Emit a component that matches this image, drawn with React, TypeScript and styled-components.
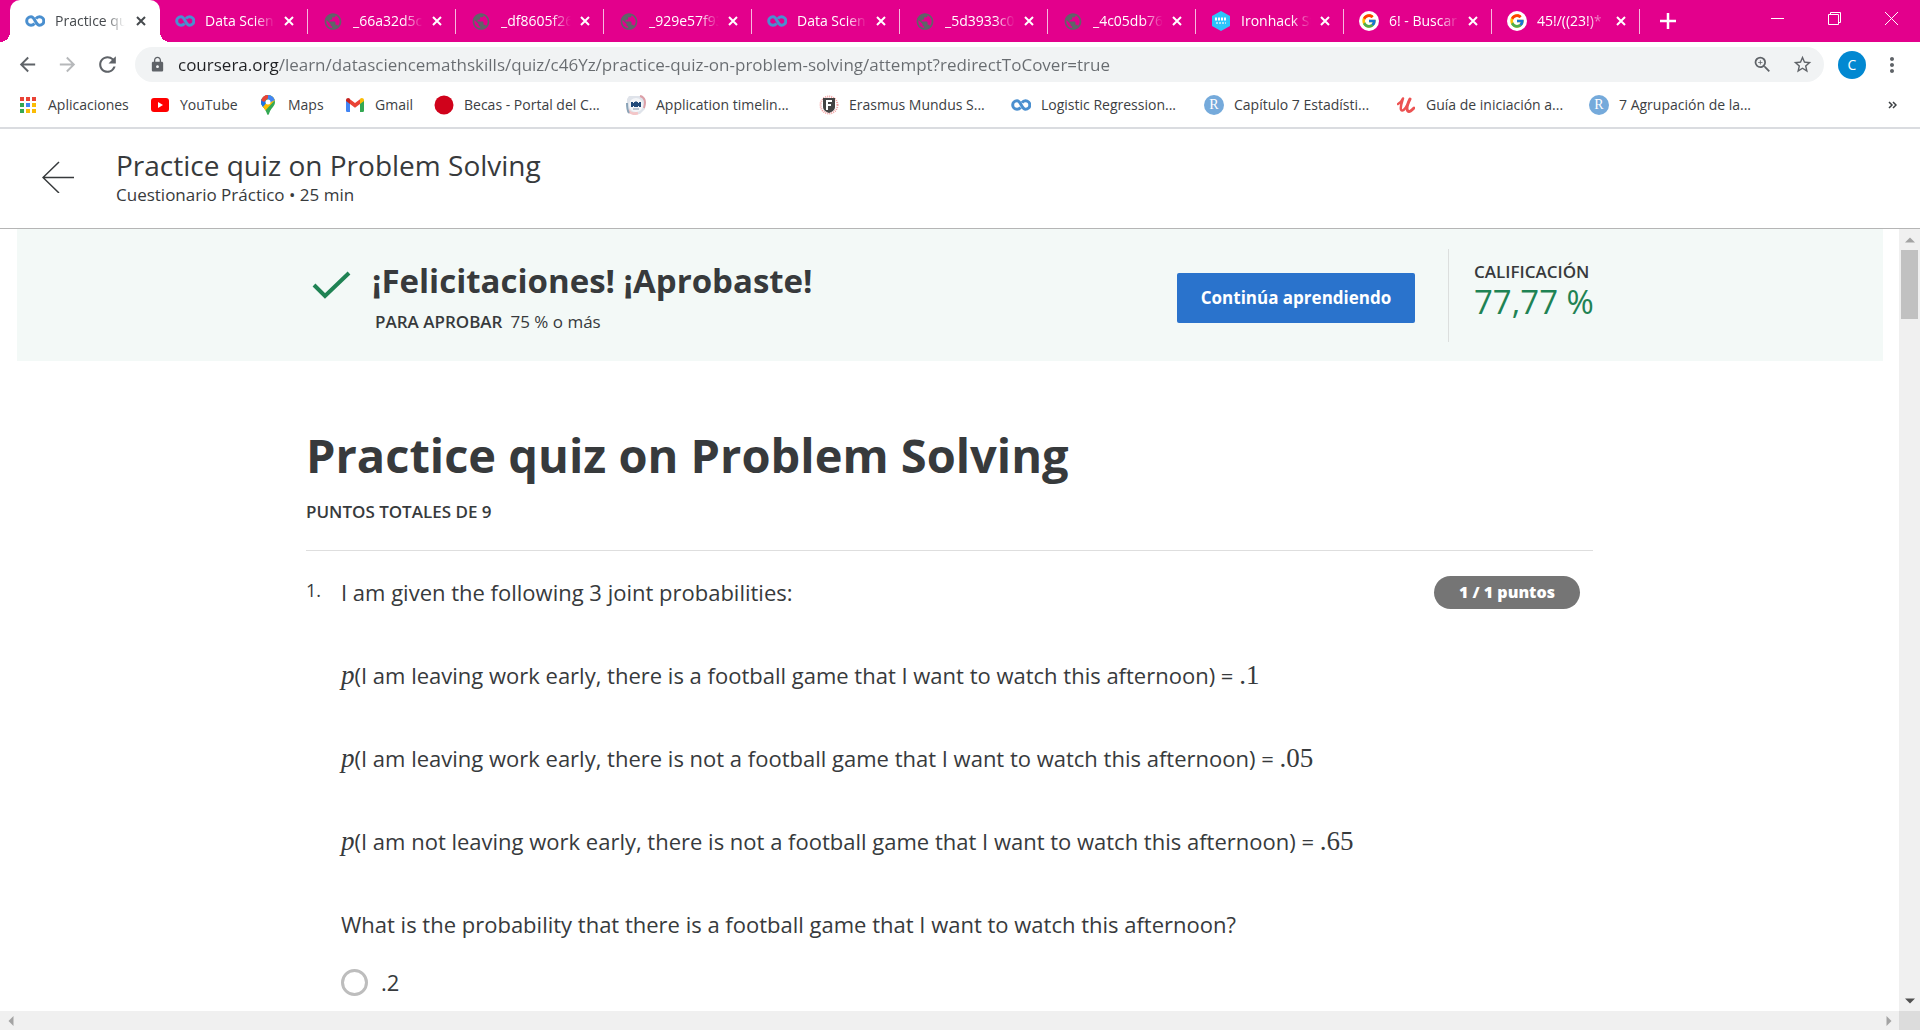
import React from 'react';
import styled, { createGlobalStyle, css } from 'styled-components';
import { MdArrowBack, MdArrowForward, MdLock, MdMoreVert, MdPublic, MdRefresh, MdStarBorder, MdZoomIn } from 'react-icons/md';
import { FcGoogle } from 'react-icons/fc';

const GlobalStyle = createGlobalStyle`
  *, *::before, *::after { box-sizing: border-box; }
  html, body, #root { height: 100%; }
  body { margin: 0; background: #fff; color: #373a3c; font-family: "Open Sans", "Noto Sans", sans-serif; overflow: hidden; }
  h1, h2, p { margin: 0; font-weight: 400; }
  button { font: inherit; color: inherit; border: 0; padding: 0; background: none; cursor: pointer; }
  a { color: inherit; text-decoration: none; }
  svg { display: block; }
`;

/* ---------- browser frame ---------- */

const Window = styled.div`
  display: flex;
  flex-direction: column;
  height: 100vh;
`;

const TabStrip = styled.div`
  display: flex;
  align-items: stretch;
  height: 42px;
  padding-left: 10px;
  flex: none;
  background: #e3008c;
  color: #fff;
  font-size: 14px;
`;

const Tab = styled.div<{ $active?: boolean }>`
  position: relative;
  display: flex;
  align-items: center;
  flex: 0 1 148px;
  min-width: 0;
  padding: 0 9px 0 15px;
  ${(p) =>
    !p.$active &&
    css`
      &::after {
        content: '';
        position: absolute;
        right: 0;
        top: 9px;
        width: 1px;
        height: 25px;
        background: #f7b8de;
      }
    `}
  ${(p) =>
    p.$active &&
    css`
      flex-basis: 150px;
      background: #fff;
      color: #45494d;
      border-radius: 10px 10px 0 0;
      &::before,
      &::after {
        content: '';
        position: absolute;
        bottom: 0;
        width: 10px;
        height: 10px;
      }
      &::before {
        left: -10px;
        background: radial-gradient(circle at 0 0, transparent 10px, #fff 10px);
      }
      &::after {
        right: -10px;
        background: radial-gradient(circle at 100% 0, transparent 10px, #fff 10px);
      }
    `}
`;

const TabLink = styled.a`
  display: flex;
  align-items: center;
  gap: 10px;
  flex: 1;
  min-width: 0;
`;

const IconBox = styled.span`
  display: flex;
  align-items: center;
  justify-content: center;
  flex: none;
  width: 20px;
  height: 20px;
`;

const TabTitle = styled.span`
  flex: none;
  width: 70px;
  overflow: hidden;
  white-space: nowrap;
  line-height: 20px;
  mask-image: linear-gradient(90deg, #000 50px, transparent 70px);
`;

const TabClose = styled.button`
  display: flex;
  align-items: center;
  justify-content: center;
  width: 20px;
  height: 20px;
`;

const NewTab = styled.button`
  display: flex;
  align-items: center;
  justify-content: center;
  width: 56px;
`;

const WindowControls = styled.div`
  display: flex;
  margin-left: auto;
`;

const WindowButton = styled.button`
  display: flex;
  align-items: center;
  justify-content: center;
  width: 57px;
  height: 37px;
`;

const Toolbar = styled.div`
  display: flex;
  align-items: center;
  height: 45px;
  flex: none;
  padding: 0 8px 0 7px;
  color: #5f6368;
`;

const ToolButton = styled.button<{ $faded?: boolean }>`
  display: flex;
  align-items: center;
  justify-content: center;
  width: 40px;
  height: 35px;
  opacity: ${(p) => (p.$faded ? 0.45 : 1)};
`;

const AddressBar = styled.div`
  display: flex;
  align-items: center;
  flex: 1;
  height: 35px;
  margin: 0 8px;
  padding: 0 2px 0 14px;
  border-radius: 18px;
  background: #f1f3f4;
`;

const AddressInput = styled.input`
  flex: 1;
  min-width: 0;
  height: 24px;
  margin-left: 12px;
  padding: 0;
  border: 0;
  outline: 0;
  font: 17px/24px 'Open Sans', 'Noto Sans', sans-serif;
  color: #5f6368;
  -webkit-text-fill-color: transparent;
  background: linear-gradient(90deg, #202124 101px, #686c70 101px);
  -webkit-background-clip: text;
  background-clip: text;
`;

const Avatar = styled.button`
  width: 28px;
  height: 28px;
  margin: 0 6px;
  border-radius: 50%;
  background: #0288d1;
  color: #fff;
  font-size: 14px;
  line-height: 28px;
`;

const BookmarksBar = styled.nav`
  display: flex;
  align-items: center;
  height: 42px;
  flex: none;
  padding: 0 18px 4px;
  border-bottom: 2px solid #dadce0;
  font-size: 14px;
  line-height: 20px;
  color: #3c4043;
`;

const Bookmark = styled.a<{ $w: number }>`
  display: flex;
  align-items: center;
  gap: 10px;
  flex: 0 1 ${(p) => p.$w}px;
  white-space: nowrap;
`;

const MoreBookmarks = styled.button`
  margin-left: auto;
  width: 20px;
  display: flex;
  justify-content: center;
`;

/* ---------- course page ---------- */

const PageHeader = styled.header`
  display: flex;
  align-items: center;
  gap: 42px;
  flex: none;
  height: 100px;
  padding: 0 42px 3px;
  border-bottom: 1px solid #b5b5b5;
`;

const HeaderTitle = styled.p`
  font-size: 28px;
  line-height: 36px;
`;

const HeaderMeta = styled.p`
  font-size: 17px;
  line-height: 24px;
`;

const Viewport = styled.div`
  display: grid;
  grid-template-columns: 1fr 21px;
  grid-template-rows: 1fr 19px;
  flex: 1;
  min-height: 0;
`;

const Scroller = styled.main`
  overflow: hidden;
  padding: 0 16px 0 17px;
`;

const Container = styled.div`
  width: 100%;
  max-width: 1288px;
  margin: 0 auto;
  padding-right: 1px;
`;

const Banner = styled.section`
  height: 132px;
  background: #f3f9f7;
`;

const BannerRow = styled(Container)`
  display: flex;
  align-items: flex-start;
  height: 100%;
  padding-top: 20px;
`;

const Result = styled.div`
  display: flex;
  gap: 20px;
  flex: 1;
  padding: 10px 0 0 6px;
`;

const ResultIcon = styled.div`
  padding-top: 11px;
`;

const ResultTitle = styled.h2`
  font-size: 33px;
  line-height: 44px;
  font-weight: 700;
`;

const PassLine = styled.p`
  padding: 7px 0 0 3px;
  font-size: 17px;
  line-height: 24px;
`;

const Strong = styled.strong`
  font-weight: 600;
  margin-right: 8px;
`;

const PrimaryButton = styled.button`
  width: 238px;
  height: 50px;
  margin-top: 24px;
  border-radius: 2px;
  background: #2a73cc;
  color: #fff;
  font-size: 17px;
  line-height: 24px;
  font-weight: 700;
`;

const Grade = styled.div`
  height: 93px;
  margin-left: 33px;
  padding: 11px 0 0 25px;
  border-left: 1px solid #dcdfde;
  width: 145px;
  white-space: nowrap;
`;

const GradeLabel = styled.p`
  font-size: 17px;
  line-height: 24px;
  font-weight: 600;
`;

const GradeValue = styled.p`
  font-size: 33px;
  line-height: 36px;
  color: #1f8354;
`;

const QuizTitle = styled.h1`
  padding-top: 60px;
  font-size: 47px;
  line-height: 68px;
  font-weight: 700;
`;

const QuizPoints = styled.p`
  padding: 11px 0 26px;
  border-bottom: 1px solid #dedede;
  font-size: 17px;
  line-height: 24px;
  font-weight: 600;
`;

const Question = styled.section`
  display: flex;
  padding-top: 25px;
`;

const QuestionNumber = styled.span`
  flex: none;
  width: 35px;
  padding-top: 2px;
  font-size: 18px;
  line-height: 24px;
`;

const QuestionBody = styled.div`
  flex: 1;
  min-width: 0;
  font-size: 22px;
  line-height: 32px;
`;

const Statement = styled.p`
  margin-bottom: 51px;
`;

const Ask = styled.p`
  margin-bottom: 26px;
`;

const MathText = styled.span<{ $italic?: boolean }>`
  font-family: 'Liberation Serif', 'Times New Roman', serif;
  font-size: 27px;
  line-height: 0;
  font-style: ${(p) => (p.$italic ? 'italic' : 'normal')};
`;

const Option = styled.label`
  display: flex;
  align-items: center;
  gap: 13px;
`;

const Radio = styled.input`
  appearance: none;
  width: 27px;
  height: 27px;
  margin: 0;
  border: 3px solid #bdbdbd;
  border-radius: 50%;
`;

const Points = styled.span`
  flex: none;
  width: 146px;
  height: 33px;
  margin-right: 13px;
  border-radius: 17px;
  background: #757575;
  color: #fff;
  text-align: center;
  font-size: 16px;
  line-height: 33px;
  font-weight: 800;
`;

const VerticalBar = styled.div`
  display: flex;
  flex-direction: column;
  align-items: center;
  background: #f0f0f0;
`;

const HorizontalBar = styled.div`
  display: flex;
  justify-content: space-between;
  align-items: center;
  background: #f0f0f0;
`;

const Thumb = styled.div`
  width: 17px;
  height: 69px;
  margin-bottom: auto;
  background: #c1c1c1;
`;

const ScrollButton = styled.button`
  display: flex;
  align-items: center;
  justify-content: center;
  width: 21px;
  height: 21px;
`;

const Corner = styled.div`
  background: #dcdcdc;
`;

/* ---------- drawings ---------- */

const Cross = () => (
  <svg width="10" height="10" viewBox="0 0 10 10" stroke="currentColor" strokeWidth="2">
    <path d="M1 1l8 8M9 1L1 9" />
  </svg>
);

const CourseraIcon = () => (
  <svg width="20" height="12" viewBox="0 0 20 12" fill="none" stroke="#4a8fcf" strokeWidth="3">
    <path d="M9.500 8.500C8.500 9.800 7.300 10.300 6 10.300a4.300 4.300 0 1 1 0-8.600c4 0 4.500 8.600 8.500 8.600a4.300 4.300 0 1 0 0-8.600c-1.500 0-2.600.6-3.500 1.900" />
  </svg>
);

const AppsIcon = () => {
  const colors = ['#ea4335', '#ea4335', '#ea4335', '#34a853', '#4285f4', '#fbbc05', '#34a853', '#fbbc05', '#fbbc05'];
  return (
    <svg width="17" height="17" viewBox="0 0 17 17">
      {colors.map((c, i) => (
        <rect key={i} x={(i % 3) * 6} y={Math.floor(i / 3) * 6} width="4" height="4" fill={c} />
      ))}
    </svg>
  );
};

const YouTubeIcon = () => (
  <svg width="18" height="14" viewBox="0 0 18 14">
    <rect width="18" height="14" rx="3" fill="#f00" />
    <path d="M7 4l5 3-5 3z" fill="#fff" />
  </svg>
);

const MapsIcon = () => (
  <svg width="14" height="20" viewBox="0 0 14 20">
    <clipPath id="pin">
      <path d="M7 0a7 7 0 0 1 7 7c0 4-3.500 5.500-5.500 10.500C8 19 7.600 20 7 20s-1-1-1.500-2.500C3.500 12.500 0 11 0 7a7 7 0 0 1 7-7z" />
    </clipPath>
    <g clipPath="url(#pin)">
      <rect width="14" height="20" fill="#34a853" />
      <path d="M0 13L14-2v7L3 17z" fill="#fbbc04" />
      <path d="M-1 0h9L0 10z" fill="#ea4335" />
      <path d="M5-1h9v6L8 8z" fill="#4285f4" />
      <path d="M0 3l6 4-5 6-3-3z" fill="#1a73e8" />
      <path d="M0 5l3-4 4-2v4L3 7z" fill="#ea4335" />
    </g>
    <circle cx="7" cy="7" r="2.500" fill="#fff" />
  </svg>
);

const GmailIcon = () => (
  <svg width="18" height="14" viewBox="0 0 18 14">
    <path d="M0 2.500L4 5v9H1.200A1.200 1.200 0 0 1 0 12.800z" fill="#4285f4" />
    <path d="M18 2.500L14 5v9h2.800a1.200 1.200 0 0 0 1.200-1.200z" fill="#34a853" />
    <path d="M14 1.200V6l4-3v-.7C18 .3 15.800-.6 14.300.6z" fill="#fbbc04" />
    <path d="M4 6V1.200l5 3.700 5-3.700V6L9 9.800z" fill="#ea4335" />
    <path d="M0 2.300V3l4 3V1.200L3.700.6C2.200-.6 0 .3 0 2.300z" fill="#c5221f" />
  </svg>
);

const DiscIcon = () => (
  <svg width="20" height="20" viewBox="0 0 20 20">
    <circle cx="10" cy="10" r="9.500" fill="#d0021b" />
  </svg>
);

const CrestIcon = () => (
  <svg width="20" height="20" viewBox="0 0 20 20">
    <path d="M3 1h12l4 3v10l-5 5H3l-2-4V4z" fill="#dfe3ea" />
    <path d="M14 1c5 1 6 6 4 12" fill="none" stroke="#dca0a8" strokeWidth="2" />
    <path d="M2 15c2 4 7 4 10 3" fill="none" stroke="#f3c6c8" strokeWidth="3" />
    <path d="M1 8c0 4 0 7 2 10" fill="none" stroke="#8aa4b8" strokeWidth="2" />
    <circle cx="10" cy="10" r="7" fill="#f4f6f9" />
    <path d="M5 7h2v1h1V7h1l1-1 1 1h1v1h1V7h2v5h-2v-1h-1v1H8v-1H7v1H5z" fill="#214a7a" />
    <path d="M7 14h6" stroke="#7f93aa" />
  </svg>
);

const ShieldIcon = () => (
  <svg width="20" height="20" viewBox="0 0 20 20">
    <circle cx="10" cy="10" r="8.500" fill="none" stroke="#f0a0a0" strokeWidth="2" strokeDasharray="1 1" />
    <path d="M4 3h12v9c0 3-3 5-6 6-3-1-6-3-6-6z" fill="#444" />
    <path d="M8 15V6h5M8 10h4" fill="none" stroke="#fff" strokeWidth="2" />
  </svg>
);

const RBadge = styled.span`
  width: 20px;
  height: 20px;
  border-radius: 50%;
  background: #75aadb;
  color: #fff;
  text-align: center;
  font: 14px/20px 'Liberation Serif', serif;
`;

const UdemyIcon = () => (
  <svg width="18" height="16" viewBox="0 0 18 16" fill="none" stroke="#ec5252" strokeLinecap="round" strokeLinejoin="round">
    <path d="M1 7c2-1 4-3 5-5.500C5 5 3 10 4 12.500s4 0 6-4" strokeWidth="2.500" />
    <path d="M13 2c-2 4-4 9-2.500 11.500S15 13 17 11" strokeWidth="3" />
  </svg>
);

const IronhackIcon = () => (
  <svg width="20" height="20" viewBox="0 0 20 20">
    <path d="M10 0l9 5v10l-9 5-9-5V5z" fill="#2dc5fa" />
    <path d="M4 8h12" stroke="#fff" strokeWidth="3" strokeDasharray="2 1" />
    <path d="M5 12h10" stroke="#a5e6fd" strokeWidth="2" strokeDasharray="2 1" />
  </svg>
);

const GoogleDisc = styled.span`
  display: flex;
  align-items: center;
  justify-content: center;
  width: 20px;
  height: 20px;
  border-radius: 50%;
  background: #fff;
`;

const Triangle = ({ turn, color }: { turn: number; color: string }) => (
  <svg width="10" height="10" viewBox="0 0 10 10">
    <path d="M0 7.500L5 2.500l5 5z" fill={color} transform={`rotate(${turn} 5 5)`} />
  </svg>
);

const icons = {
  coursera: <CourseraIcon />,
  globe: <MdPublic size={21} color="#5f6368" />,
  ironhack: <IronhackIcon />,
  google: (
    <GoogleDisc>
      <FcGoogle size={16} />
    </GoogleDisc>
  ),
  r: <RBadge>R</RBadge>,
};

const tabs = [
  { icon: icons.coursera, title: 'Practice quiz on' },
  { icon: icons.coursera, title: 'Data Science' },
  { icon: icons.globe, title: '_66a32d5c0' },
  { icon: icons.globe, title: '_df8605f26' },
  { icon: icons.globe, title: '_929e57f93' },
  { icon: icons.coursera, title: 'Data Science' },
  { icon: icons.globe, title: '_5d3933c0' },
  { icon: icons.globe, title: '_4c05db76' },
  { icon: icons.ironhack, title: 'Ironhack St' },
  { icon: icons.google, title: '6! - Buscar' },
  { icon: icons.google, title: '45!/((23!)*' },
];

const bookmarks = [
  { icon: <AppsIcon />, title: 'Aplicaciones', w: 132 },
  { icon: <YouTubeIcon />, title: 'YouTube', w: 108 },
  { icon: <MapsIcon />, title: 'Maps', w: 87 },
  { icon: <GmailIcon />, title: 'Gmail', w: 89 },
  { icon: <DiscIcon />, title: 'Becas - Portal del C...', w: 192 },
  { icon: <CrestIcon />, title: 'Application timelin...', w: 193 },
  { icon: <ShieldIcon />, title: 'Erasmus Mundus S...', w: 192 },
  { icon: icons.coursera, title: 'Logistic Regression...', w: 193 },
  { icon: icons.r, title: 'Capítulo 7 Estadísti...', w: 192 },
  { icon: <UdemyIcon />, title: 'Guía de iniciación a...', w: 193 },
  { icon: icons.r, title: '7 Agrupación de la...', w: 192 },
];

const statements = [
  { text: '(I am leaving work early, there is a football game that I want to watch this afternoon) = ', value: '.1' },
  { text: '(I am leaving work early, there is not a football game that I want to watch this afternoon) = ', value: '.05' },
  { text: '(I am not leaving work early, there is not a football game that I want to watch this afternoon) = ', value: '.65' },
];

export default function App() {
  return (
    <Window>
      <GlobalStyle />
      <TabStrip>
        {tabs.map((tab, i) => (
          <Tab key={i} $active={i === 0}>
            <TabLink href="#">
              <IconBox>{tab.icon}</IconBox>
              <TabTitle>{tab.title}</TabTitle>
            </TabLink>
            <TabClose aria-label="Cerrar pestaña">
              <Cross />
            </TabClose>
          </Tab>
        ))}
        <NewTab aria-label="Nueva pestaña">
          <svg width="16" height="16" viewBox="0 0 16 16" stroke="currentColor" strokeWidth="2.500">
            <path d="M8 0v16M0 8h16" />
          </svg>
        </NewTab>
        <WindowControls>
          <WindowButton aria-label="Minimizar">
            <svg width="13" height="13" viewBox="0 0 13 13" stroke="currentColor">
              <path d="M0 6.500h13" />
            </svg>
          </WindowButton>
          <WindowButton aria-label="Restaurar">
            <svg width="13" height="13" viewBox="0 0 13 13" fill="none" stroke="currentColor">
              <path d="M.5 2.500h10v10H.5zM2.500 2.500v-2h10v10h-2" />
            </svg>
          </WindowButton>
          <WindowButton aria-label="Cerrar">
            <svg width="13" height="13" viewBox="0 0 13 13" stroke="currentColor">
              <path d="M0 0l13 13M13 0L0 13" />
            </svg>
          </WindowButton>
        </WindowControls>
      </TabStrip>

      <Toolbar>
        <ToolButton aria-label="Atrás">
          <MdArrowBack size={23} />
        </ToolButton>
        <ToolButton aria-label="Adelante" $faded>
          <MdArrowForward size={23} />
        </ToolButton>
        <ToolButton aria-label="Volver a cargar">
          <MdRefresh size={25} />
        </ToolButton>
        <AddressBar>
          <MdLock size={17} />
          <AddressInput
            aria-label="Dirección"
            defaultValue="coursera.org/learn/datasciencemathskills/quiz/c46Yz/practice-quiz-on-problem-solving/attempt?redirectToCover=true"
          />
          <ToolButton aria-label="Zoom">
            <MdZoomIn size={21} />
          </ToolButton>
          <ToolButton aria-label="Añadir a marcadores">
            <MdStarBorder size={21} />
          </ToolButton>
        </AddressBar>
        <Avatar>C</Avatar>
        <ToolButton aria-label="Menú">
          <MdMoreVert size={24} />
        </ToolButton>
      </Toolbar>

      <BookmarksBar>
        {bookmarks.map((b) => (
          <Bookmark key={b.title} href="#" $w={b.w}>
            <IconBox>{b.icon}</IconBox>
            {b.title}
          </Bookmark>
        ))}
        <MoreBookmarks aria-label="Más marcadores">
          <svg width="9" height="8" viewBox="0 0 9 8" fill="none" stroke="currentColor" strokeWidth="1.500">
            <path d="M1 1l3 3-3 3M5 1l3 3-3 3" />
          </svg>
        </MoreBookmarks>
      </BookmarksBar>

      <PageHeader>
        <button aria-label="Volver">
          <svg width="32" height="32" viewBox="0 0 32 32" fill="none" stroke="#373a3c" strokeWidth="1.500">
            <path d="M17 1L1 16.500 17 32M1 16.500h31" />
          </svg>
        </button>
        <div>
          <HeaderTitle>Practice quiz on Problem Solving</HeaderTitle>
          <HeaderMeta>Cuestionario Práctico • 25 min</HeaderMeta>
        </div>
      </PageHeader>

      <Viewport>
        <Scroller>
          <Banner>
            <BannerRow>
              <Result>
                <ResultIcon>
                  <svg width="40" height="30" viewBox="0 0 40 30" fill="none" stroke="#1f8354" strokeWidth="4">
                    <path d="M2 15l11 11L37 3" />
                  </svg>
                </ResultIcon>
                <div>
                  <ResultTitle>¡Felicitaciones! ¡Aprobaste!</ResultTitle>
                  <PassLine>
                    <Strong>PARA APROBAR</Strong>75 % o más
                  </PassLine>
                </div>
              </Result>
              <PrimaryButton>Continúa aprendiendo</PrimaryButton>
              <Grade>
                <GradeLabel>CALIFICACIÓN</GradeLabel>
                <GradeValue>77,77 %</GradeValue>
              </Grade>
            </BannerRow>
          </Banner>

          <Container>
            <QuizTitle>Practice quiz on Problem Solving</QuizTitle>
            <QuizPoints>PUNTOS TOTALES DE 9</QuizPoints>
            <Question>
              <QuestionNumber>1.</QuestionNumber>
              <QuestionBody>
                <Statement>I am given the following 3 joint probabilities:</Statement>
                {statements.map((s) => (
                  <Statement key={s.value}>
                    <MathText $italic>p</MathText>
                    {s.text}
                    <MathText>{s.value}</MathText>
                  </Statement>
                ))}
                <Ask>What is the probability that there is a football game that I want to watch this afternoon?</Ask>
                <Option>
                  <Radio type="radio" name="q1" />
                  .2
                </Option>
              </QuestionBody>
              <Points>1 / 1 puntos</Points>
            </Question>
          </Container>
        </Scroller>
        <VerticalBar>
          <ScrollButton aria-label="Subir">
            <Triangle turn={0} color="#a3a3a3" />
          </ScrollButton>
          <Thumb />
          <ScrollButton aria-label="Bajar">
            <Triangle turn={180} color="#505050" />
          </ScrollButton>
        </VerticalBar>
        <HorizontalBar>
          <ScrollButton aria-label="Izquierda">
            <Triangle turn={-90} color="#a3a3a3" />
          </ScrollButton>
          <ScrollButton aria-label="Derecha">
            <Triangle turn={90} color="#a3a3a3" />
          </ScrollButton>
        </HorizontalBar>
        <Corner />
      </Viewport>
    </Window>
  );
}
